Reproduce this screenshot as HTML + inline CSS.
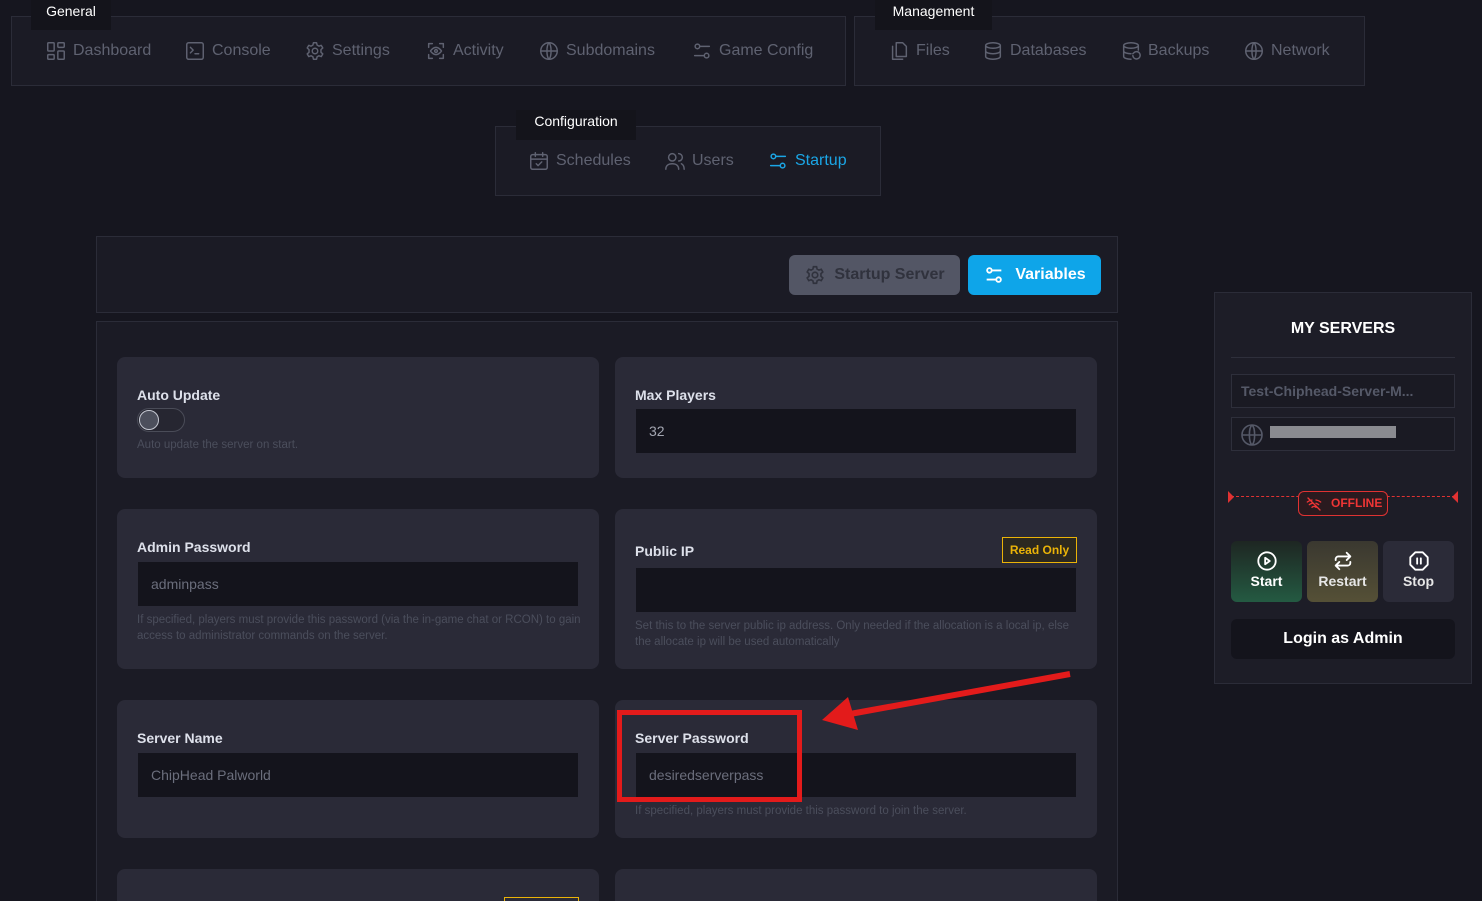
<!DOCTYPE html>
<html style="overflow:hidden;width:1482px;height:901px"><head><meta charset="utf-8"><style>
*{box-sizing:border-box;margin:0;padding:0}
body{width:1482px;height:901px;overflow:hidden;background:#16161f;font-family:"Liberation Sans",sans-serif;position:relative}
.a{position:absolute}
.box{position:absolute;background:#1b1b25;border:1px solid #2b2c38}
.lbl{position:absolute;background:#14141b;color:#fff;font-size:14px;text-align:center;padding-top:3px;height:30px}
.nav{position:absolute;display:flex;align-items:center;color:#5f6271;font-size:16px;gap:6px;white-space:nowrap}
.nav svg{width:22px;height:22px;fill:none;stroke:currentColor;stroke-width:1.6;stroke-linecap:round;stroke-linejoin:round}
.card{position:absolute;background:#2a2a37;border-radius:8px}
.cl{position:absolute;color:#dde0ea;font-weight:bold;font-size:14px}
.inp{position:absolute;background:#14141c;color:#6b6e7c;font-size:14px;padding:0 13px;line-height:44px;height:44px}
.hint{position:absolute;color:#4b4e5c;font-size:11.5px;line-height:16px}
.sb{position:absolute;border-radius:6px;color:#fff;font-weight:bold;font-size:14px;text-align:center}
.sb svg{display:block;margin:9px auto 1px;width:22px;height:22px;fill:none;stroke:#fff;stroke-width:2;stroke-linecap:round;stroke-linejoin:round}
</style></head><body>

<div class="box" style="left:11px;top:16px;width:835px;height:70px"></div>
<div class="lbl" style="left:31px;top:0;width:80px">General</div>
<div class="nav" style="left:45px;top:40px"><svg viewBox="0 0 24 24"><rect x="3" y="3" width="7" height="9" rx="1"/><rect x="14" y="3" width="7" height="5" rx="1"/><rect x="14" y="12" width="7" height="9" rx="1"/><rect x="3" y="16" width="7" height="5" rx="1"/></svg>Dashboard</div>
<div class="nav" style="left:184px;top:40px"><svg viewBox="0 0 24 24"><rect x="3" y="3" width="18" height="18" rx="2"/><path d="M7 8l3 3-3 3M12 15h4"/></svg>Console</div>
<div class="nav" style="left:304px;top:40px"><svg viewBox="0 0 24 24"><circle cx="12" cy="12" r="3"/><path d="M10.3 3h3.4l.6 2.6 2 1.1 2.5-.9 1.7 2.9-2 1.8v2.9l2 1.8-1.7 2.9-2.5-.9-2 1.1-.6 2.7h-3.4l-.6-2.7-2-1.1-2.5.9-1.7-2.9 2-1.8v-2.9l-2-1.8 1.7-2.9 2.5.9 2-1.1z"/></svg>Settings</div>
<div class="nav" style="left:425px;top:40px"><svg viewBox="0 0 24 24"><path d="M4 8V4h4M16 4h4v4M20 16v4h-4M8 20H4v-4"/><path d="M6 12s2.5-4 6-4 6 4 6 4-2.5 4-6 4-6-4-6-4z"/><circle cx="12" cy="12" r="1.5"/></svg>Activity</div>
<div class="nav" style="left:538px;top:40px"><svg viewBox="0 0 24 24"><circle cx="12" cy="12" r="9"/><path d="M3 12h18M12 3c3 3 3 15 0 18M12 3c-3 3-3 15 0 18"/></svg>Subdomains</div>
<div class="nav" style="left:691px;top:40px"><svg viewBox="0 0 24 24"><circle cx="7" cy="7" r="2.5"/><circle cx="17" cy="17" r="2.5"/><path d="M10 7h10M4 17h10"/></svg>Game Config</div>

<div class="box" style="left:854px;top:16px;width:511px;height:70px"></div>
<div class="lbl" style="left:875px;top:0;width:117px">Management</div>
<div class="nav" style="left:888px;top:40px"><svg viewBox="0 0 24 24"><path d="M9 3h7l4 4v11H9z"/><path d="M5 7v14h11"/></svg>Files</div>
<div class="nav" style="left:982px;top:40px"><svg viewBox="0 0 24 24"><ellipse cx="12" cy="6" rx="8" ry="3"/><path d="M4 6v12c0 1.7 3.6 3 8 3s8-1.3 8-3V6M4 12c0 1.7 3.6 3 8 3s8-1.3 8-3"/></svg>Databases</div>
<div class="nav" style="left:1120px;top:40px"><svg viewBox="0 0 24 24"><ellipse cx="12" cy="6" rx="8" ry="3"/><path d="M4 6v12c0 1.7 3.6 3 8 3M20 6v5M4 12c0 1.7 3.6 3 8 3M14 17a4 4 0 1 0 1-3l-1 1"/></svg>Backups</div>
<div class="nav" style="left:1243px;top:40px"><svg viewBox="0 0 24 24"><circle cx="12" cy="12" r="9"/><path d="M3 12h18M12 3c3 3 3 15 0 18M12 3c-3 3-3 15 0 18"/></svg>Network</div>

<div class="box" style="left:495px;top:126px;width:386px;height:70px"></div>
<div class="lbl" style="left:516px;top:110px;width:120px">Configuration</div>
<div class="nav" style="left:528px;top:150px"><svg viewBox="0 0 24 24"><rect x="3" y="5" width="18" height="16" rx="2"/><path d="M3 10h18M8 3v4M16 3v4M9 15l2 2 4-4"/></svg>Schedules</div>
<div class="nav" style="left:664px;top:150px"><svg viewBox="0 0 24 24"><circle cx="9" cy="8" r="4"/><path d="M2 21c0-4 3-6 7-6s7 2 7 6M16 4a4 4 0 0 1 0 8M19 15c2 1 3 3 3 6"/></svg>Users</div>
<div class="nav" style="left:767px;top:150px;color:#1ba6e6"><svg viewBox="0 0 24 24"><circle cx="7" cy="7" r="2.5"/><circle cx="17" cy="17" r="2.5"/><path d="M10 7h10M4 17h10"/></svg>Startup</div>

<div class="box" style="left:96px;top:236px;width:1022px;height:77px"></div>
<div class="a" style="left:789px;top:255px;width:171px;height:40px;background:#535665;border-radius:6px;color:#30323d;font-weight:bold;font-size:16px;display:flex;align-items:center;justify-content:center;gap:8px"><svg width="22" height="22" viewBox="0 0 24 24" fill="none" stroke="#30323d" stroke-width="1.8"><circle cx="12" cy="12" r="3"/><path d="M10.3 3h3.4l.6 2.6 2 1.1 2.5-.9 1.7 2.9-2 1.8v2.9l2 1.8-1.7 2.9-2.5-.9-2 1.1-.6 2.7h-3.4l-.6-2.7-2-1.1-2.5.9-1.7-2.9 2-1.8v-2.9l-2-1.8 1.7-2.9 2.5.9 2-1.1z"/></svg>Startup Server</div>
<div class="a" style="left:968px;top:255px;width:133px;height:40px;background:#0ea5e9;border-radius:6px;color:#fff;font-weight:bold;font-size:16px;display:flex;align-items:center;justify-content:center;gap:10px"><svg width="22" height="22" viewBox="0 0 24 24" fill="none" stroke="#fff" stroke-width="2"><circle cx="7" cy="7" r="2.5"/><circle cx="17" cy="17" r="2.5"/><path d="M10 7h10M4 17h10"/></svg>Variables</div>

<div class="box" style="left:96px;top:321px;width:1022px;height:590px"></div>

<div class="card" style="left:117px;top:357px;width:482px;height:121px"></div>
<div class="cl" style="left:137px;top:387px">Auto Update</div>
<div class="a" style="left:137px;top:408px;width:48px;height:24px;border:1px solid #4a4c58;border-radius:12px;background:#262631"></div>
<div class="a" style="left:139px;top:410px;width:20px;height:20px;border:1.5px solid #c5c8d2;border-radius:50%;background:#4c4f5c"></div>
<div class="hint" style="left:137px;top:437px">Auto update the server on start.</div>

<div class="card" style="left:615px;top:357px;width:482px;height:121px"></div>
<div class="cl" style="left:635px;top:387px">Max Players</div>
<div class="inp" style="left:636px;top:409px;width:440px;color:#a3a6b1">32</div>

<div class="card" style="left:117px;top:509px;width:482px;height:160px"></div>
<div class="cl" style="left:137px;top:539px">Admin Password</div>
<div class="inp" style="left:138px;top:562px;width:440px">adminpass</div>
<div class="hint" style="left:137px;top:612px;width:445px">If specified, players must provide this password (via the in-game chat or RCON) to gain access to administrator commands on the server.</div>

<div class="card" style="left:615px;top:509px;width:482px;height:160px"></div>
<div class="cl" style="left:635px;top:543px">Public IP</div>
<div class="a" style="left:1002px;top:537px;width:75px;height:26px;border:1px solid #eab308;background:#2b2820;color:#eab308;font-weight:bold;font-size:12px;text-align:center;line-height:24px">Read Only</div>
<div class="inp" style="left:636px;top:568px;width:440px"></div>
<div class="hint" style="left:635px;top:618px;width:445px">Set this to the server public ip address. Only needed if the allocation is a local ip, else the allocate ip will be used automatically</div>

<div class="card" style="left:117px;top:700px;width:482px;height:138px"></div>
<div class="cl" style="left:137px;top:730px">Server Name</div>
<div class="inp" style="left:138px;top:753px;width:440px">ChipHead Palworld</div>

<div class="card" style="left:615px;top:700px;width:482px;height:138px"></div>
<div class="cl" style="left:635px;top:730px">Server Password</div>
<div class="inp" style="left:636px;top:753px;width:440px">desiredserverpass</div>
<div class="hint" style="left:635px;top:803px">If specified, players must provide this password to join the server.</div>

<div class="card" style="left:117px;top:869px;width:482px;height:40px;border-radius:8px 8px 0 0"></div>
<div class="a" style="left:504px;top:897px;width:75px;height:10px;border:1px solid #eab308"></div>
<div class="card" style="left:615px;top:869px;width:482px;height:40px;border-radius:8px 8px 0 0"></div>

<svg class="a" style="left:0;top:0" width="1482" height="901">
<rect x="619.5" y="712.5" width="180" height="87" fill="none" stroke="#e31b1b" stroke-width="5"/>
<path d="M1070 674 L850 714" stroke="#e31b1b" stroke-width="6" fill="none"/>
<path d="M822 720 L848 697 L858 730 Z" fill="#e31b1b"/>
</svg>

<div class="box" style="left:1214px;top:292px;width:258px;height:392px;background:#1d1d27"></div>
<div class="a" style="left:1214px;top:320px;width:258px;text-align:center;color:#fff;font-weight:bold;font-size:16px">MY SERVERS</div>
<div class="a" style="left:1231px;top:357px;width:224px;height:1px;background:#2e2f3b"></div>
<div class="a" style="left:1231px;top:374px;width:224px;height:34px;border:1px solid #2e2f3b;background:#1a1a23;color:#555968;font-weight:bold;font-size:14px;line-height:32px;padding-left:9px">Test-Chiphead-Server-M...</div>
<div class="a" style="left:1231px;top:417px;width:224px;height:34px;border:1px solid #2e2f3b;background:#1a1a23"></div>
<svg class="a" style="left:1240px;top:423px" width="24" height="24" viewBox="0 0 24 24" fill="none" stroke="#555968" stroke-width="1.6"><circle cx="12" cy="12" r="10"/><path d="M2 12h20M12 2c3.5 3 3.5 17 0 20M12 2c-3.5 3-3.5 17 0 20"/></svg>
<div class="a" style="left:1270px;top:426px;width:126px;height:12px;background:#8a8b90"></div>
<div class="a" style="left:1231px;top:496px;width:224px;border-top:1.5px dashed #e03232"></div>
<div class="a" style="left:1228px;top:491px;width:0;height:0;border-top:6px solid transparent;border-bottom:6px solid transparent;border-left:6px solid #e03232"></div>
<div class="a" style="left:1452px;top:491px;width:0;height:0;border-top:6px solid transparent;border-bottom:6px solid transparent;border-right:6px solid #e03232"></div>
<div class="a" style="left:1298px;top:491px;width:90px;height:25px;border:1.5px solid #e03232;border-radius:6px;background:#2a1a1f;color:#ef3535;font-weight:bold;font-size:12px;line-height:22px;padding-left:32px">OFFLINE</div>
<svg class="a" style="left:1306px;top:496px" width="16" height="16" viewBox="0 0 24 24" fill="none" stroke="#ef3535" stroke-width="2" stroke-linecap="round"><path d="M3 3l18 18M2 9a15 15 0 0 1 7-3M22 9a15 15 0 0 0-7-3M5 13a10 10 0 0 1 4-2M19 13a10 10 0 0 0-4-2M9 17a4 4 0 0 1 6 0"/></svg>
<div class="sb" style="left:1231px;top:541px;width:71px;height:61px;background:linear-gradient(#1e2622,#245a42)"><svg viewBox="0 0 24 24"><circle cx="12" cy="12" r="9.5"/><path d="M10 8.5v7l5-3.5z"/></svg>Start</div>
<div class="sb" style="left:1307px;top:541px;width:71px;height:61px;background:linear-gradient(#3a3830,#555036);color:#e6e6e6"><svg viewBox="0 0 24 24"><path d="M16 3l4 4-4 4M20 7H7a3 3 0 0 0-3 3v1M8 21l-4-4 4-4M4 17h13a3 3 0 0 0 3-3v-1"/></svg>Restart</div>
<div class="sb" style="left:1383px;top:541px;width:71px;height:61px;background:#2b2b38;color:#e6e6e6"><svg viewBox="0 0 24 24"><path d="M8 2.5h8l5.5 5.5v8L16 21.5H8L2.5 16V8z"/><path d="M10 9v6M14 9v6"/></svg>Stop</div>
<div class="a" style="left:1231px;top:619px;width:224px;height:40px;border-radius:6px;background:#14141c;color:#fff;font-weight:bold;font-size:16px;text-align:center;line-height:40px">Login as Admin</div>
</body></html>
